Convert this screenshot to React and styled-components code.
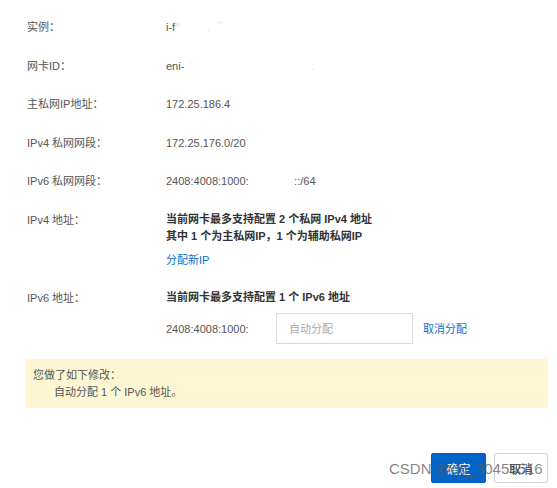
import React from 'react';
import styled, { createGlobalStyle } from 'styled-components';

const Global = createGlobalStyle`
  body {
    margin: 0;
    background: #fff;
    font-family: "Segoe UI", "Liberation Sans", "Noto Sans CJK SC", sans-serif;
    font-size: 11px;
    color: #333;
  }
`;

const Page = styled.div`
  position: relative;
  width: 557px;
  height: 488px;
  box-sizing: border-box;
  padding: 18px 9px 0 26px;
  display: flex;
  flex-direction: column;
`;

const Form = styled.div`
  display: grid;
  grid-template-columns: 139px 1fr;
  row-gap: 20.5px;
  padding-left: 1px;
`;

const Label = styled.div`
  line-height: 18px;
  color: #555;
`;

const Value = styled.div`
  line-height: 18px;
  color: #555;
  display: flex;
  flex-direction: column;
  align-items: flex-start;
`;

const Strong = styled.div`
  font-weight: bold;
  color: #333;
  line-height: 17px;
`;

const Link = styled.a`
  color: #0a70d0;
  text-decoration: none;
  margin-top: ${p => p.$top || 0}px;
  cursor: pointer;
`;

const Faint = styled.span`
  color: #ddd;
  letter-spacing: 2px;
`;

const InputRow = styled.div`
  display: flex;
  align-items: center;
  margin-top: 7px;
`;

const Prefix = styled.span`
  width: 110px;
  color: #555;
`;

const Input = styled.div`
  width: 123px;
  height: 29px;
  border: 1px solid #d7dbe0;
  box-sizing: content-box;
  display: flex;
  align-items: center;
  padding-left: 12px;
  color: #aaa;
  margin-right: 10px;
`;

const Notice = styled.div`
  margin-top: 15px;
  height: 49px;
  box-sizing: border-box;
  background: #fff6d3;
  padding: 8px 8px 0 7px;
  line-height: 17px;
  color: #555;
`;

const Indent = styled.div`
  padding-left: 21px;
`;

const Footer = styled.div`
  margin-top: 45px;
  display: flex;
  justify-content: flex-end;
  gap: 8px;
`;

const Button = styled.button`
  width: ${p => p.$w}px;
  height: 30px;
  font: inherit;
  font-size: 12px;
  border-radius: 2px;
  border: 1px solid ${p => (p.$primary ? '#0064c8' : '#d2d6db')};
  background: ${p => (p.$primary ? '#0064c8' : '#fff')};
  color: ${p => (p.$primary ? '#fff' : '#333')};
  padding: 0;
`;

const Watermark = styled.div`
  position: absolute;
  left: 389px;
  top: 460px;
  font-family: "Liberation Sans", sans-serif;
  font-size: 15px;
  color: rgba(90, 90, 90, 0.75);
  pointer-events: none;
  white-space: nowrap;
`;

export default function App() {
  return (
    <Page>
      <Global />
      <Form>
        <Label>实例：</Label>
        <Value><span>i-f<Faint>^ &nbsp; &nbsp; . ‾</Faint></span></Value>

        <Label>网卡ID：</Label>
        <Value><span>eni-<Faint> ˙ &nbsp; &nbsp; &nbsp; &nbsp; &nbsp; &nbsp; &nbsp; &nbsp; &nbsp; &nbsp; &nbsp; .</Faint></span></Value>

        <Label>主私网IP地址：</Label>
        <Value>172.25.186.4</Value>

        <Label>IPv4 私网网段：</Label>
        <Value>172.25.176.0/20</Value>

        <Label>IPv6 私网网段：</Label>
        <Value><span>2408:4008:1000:<Faint> &nbsp; &nbsp; &nbsp; &nbsp; </Faint>::/64</span></Value>

        <Label>IPv4 地址：</Label>
        <Value>
          <Strong>当前网卡最多支持配置 2 个私网 IPv4 地址</Strong>
          <Strong>其中 1 个为主私网IP，1 个为辅助私网IP</Strong>
          <Link $top={6}>分配新IP</Link>
        </Value>

        <Label>IPv6 地址：</Label>
        <Value>
          <Strong>当前网卡最多支持配置 1 个 IPv6 地址</Strong>
          <InputRow>
            <Prefix>2408:4008:1000:</Prefix>
            <Input>自动分配</Input>
            <Link>取消分配</Link>
          </InputRow>
        </Value>
      </Form>

      <Notice>
        <div>您做了如下修改：</div>
        <Indent>自动分配 1 个 IPv6 地址。</Indent>
      </Notice>

      <Footer>
        <Button $primary $w={55}>确定</Button>
        <Button $w={54}>取消</Button>
      </Footer>

      <Watermark>CSDN @qq_30455516</Watermark>
    </Page>
  );
}
